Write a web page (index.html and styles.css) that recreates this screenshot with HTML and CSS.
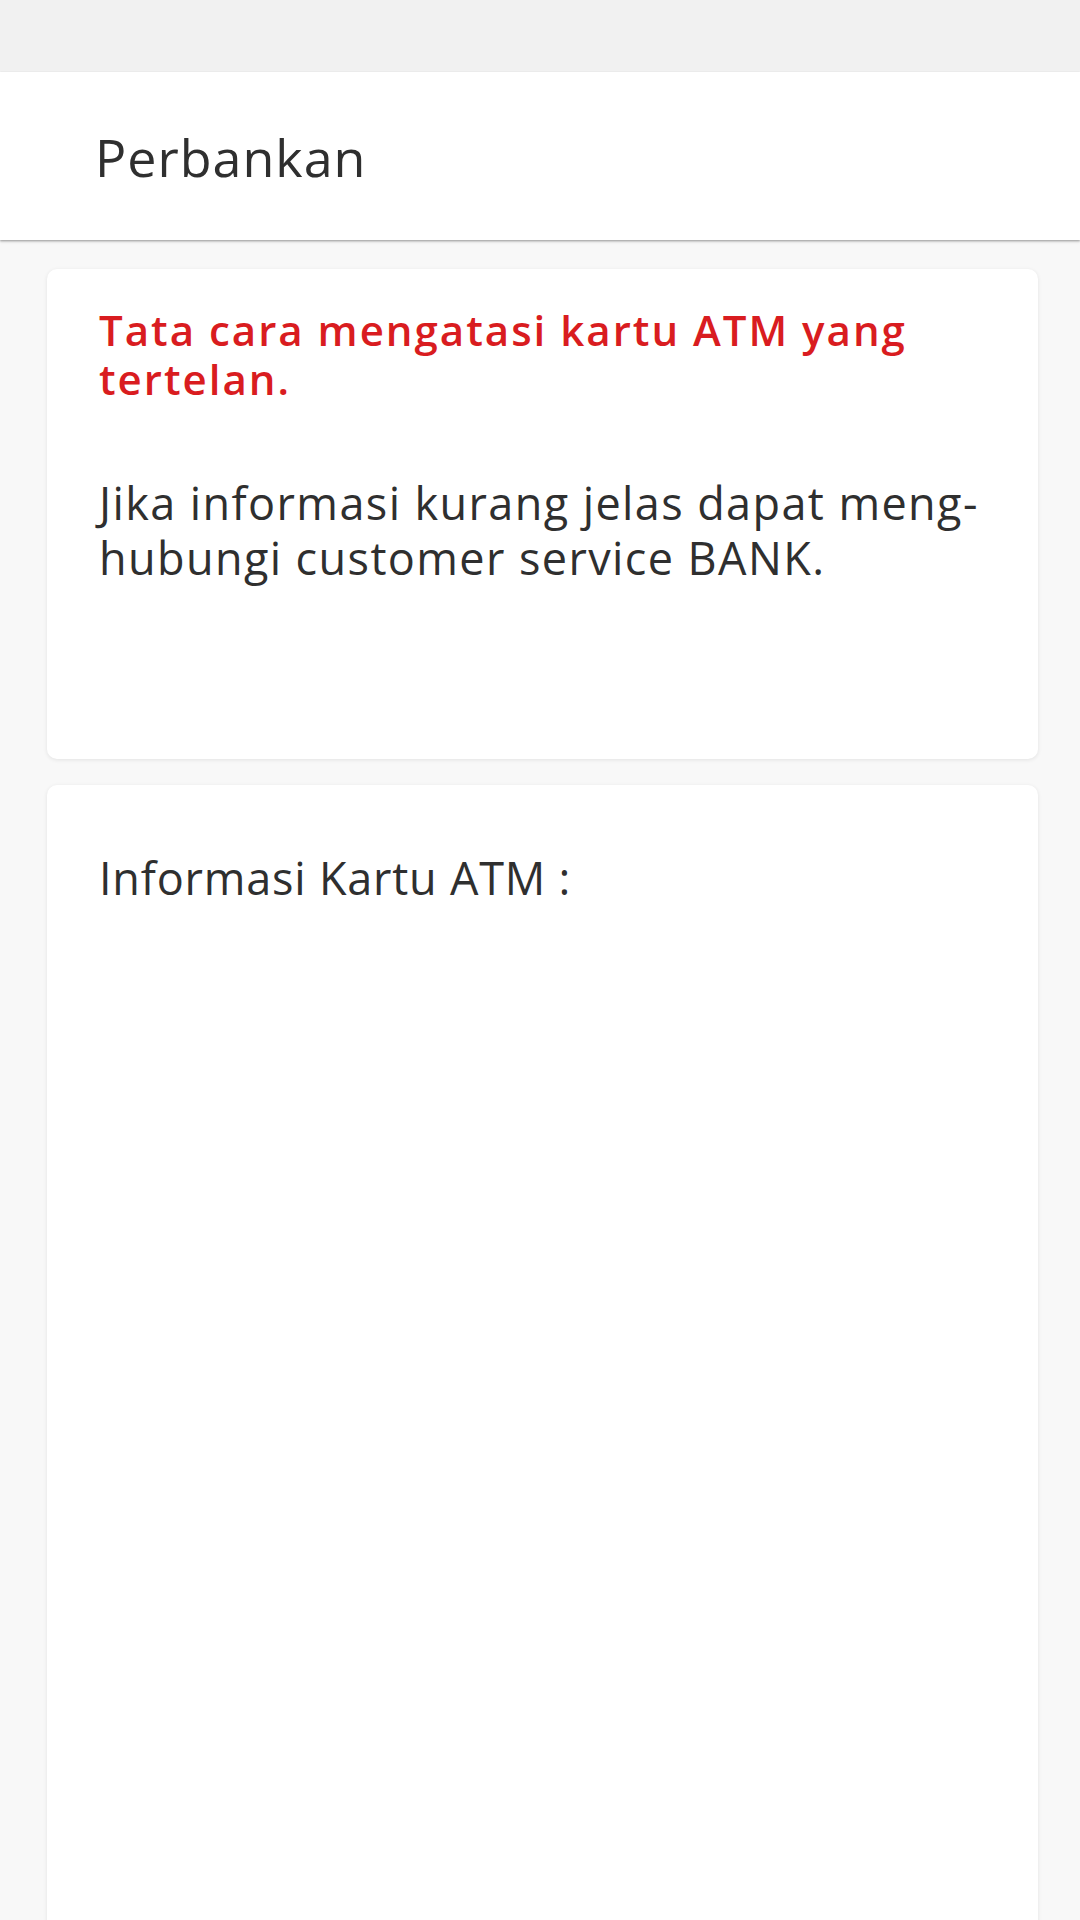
FILE: index.html
```html
<!DOCTYPE html>
<html lang="id">
<head>
<meta charset="utf-8">
<title>Perbankan</title>
<link rel="stylesheet" href="styles.css">
</head>
<body>
<div class="status-bar"></div>
<header class="app-bar">
  <h1 class="app-title">Perbankan</h1>
</header>
<main class="content">
  <section class="card card-intro">
    <h2 class="card-title">Tata cara mengatasi kartu ATM yang<br>tertelan.</h2>
    <p class="card-text">Jika informasi kurang jelas dapat meng-<br>hubungi customer service BANK.</p>
  </section>
  <section class="card card-info">
    <p class="card-text card-label">Informasi Kartu ATM :</p>
  </section>
</main>
</body>
</html>
```

FILE: styles.css
```css
html, body {
  margin: 0;
  padding: 0;
}
body {
  width: 1080px;
  height: 1920px;
  overflow: hidden;
  background: #f8f8f8;
  font-family: "Open Sans", "Noto Sans", sans-serif;
  color: #2f2f2f;
}
.status-bar {
  height: 72px;
  background: #f1f1f1;
}
.app-bar {
  position: relative;
  z-index: 1;
  height: 168px;
  box-sizing: border-box;
  padding: 55px 0 0 95px;
  background: #ffffff;
  box-shadow: 0 1px 2px rgba(0,0,0,0.30), 0 2px 3px rgba(0,0,0,0.10);
}
.app-title {
  margin: 0;
  font-size: 52px;
  line-height: 60px;
  font-weight: 400;
  letter-spacing: 1px;
  color: #2f2f2f;
}
.content {
  display: flex;
  flex-direction: column;
  gap: 26px;
  padding: 29px 42px 0 47px;
}
.card {
  background: #ffffff;
  border-radius: 10px;
  box-shadow: 0 1px 4px rgba(0,0,0,0.09);
  padding: 0 40px 0 52px;
}
.card-intro {
  height: 490px;
  box-sizing: border-box;
  padding-top: 36px;
}
.card-info {
  min-height: 1200px;
  padding-top: 65px;
}
.card-title {
  margin: 0;
  font-size: 42px;
  line-height: 49px;
  font-weight: 600;
  letter-spacing: 2px;
  color: #d91c20;
  white-space: nowrap;
}
.card-text {
  margin: 0;
  font-size: 45px;
  line-height: 55px;
  font-weight: 400;
  letter-spacing: 1.4px;
  color: #2f2f2f;
  white-space: nowrap;
}
.card-label {
  letter-spacing: 0.8px;
}
.card-intro .card-text {
  margin-top: 72px;
}
```
